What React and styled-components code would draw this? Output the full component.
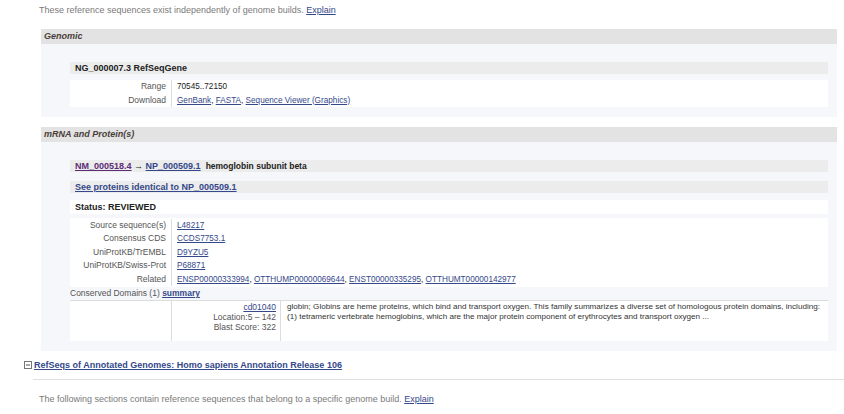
import React from "react";
import styled, { createGlobalStyle } from "styled-components";

const GlobalStyle = createGlobalStyle`
  body {
    margin: 0;
    background: #ffffff;
    font-family: "Liberation Sans", Arial, sans-serif;
    font-size: 9px;
    color: #333;
  }
`;

const Page = styled.div`
  width: 844px;
  padding-top: 4px;
`;

const Note = styled.p`
  margin: 0;
  padding-left: 39px;
  line-height: 13px;
  color: #7a7a7a;
  font-size: 9px;
`;

const Link = styled.a`
  color: ${({ visited }) => (visited ? "#5c2d77" : "#34488a")};
  text-decoration: underline;
  font-weight: ${({ bold }) => (bold ? "bold" : "normal")};
  cursor: pointer;
`;

const Sections = styled.div`
  margin: 12px 0 0 41px;
  width: 796px;
  display: flex;
  flex-direction: column;
  gap: 10px;
`;

const SectionHead = styled.div`
  height: 15px;
  line-height: 15px;
  padding-left: 3px;
  background: #e3e3e3;
  color: #4a3e3a;
  font-weight: bold;
  font-style: italic;
  font-size: 9px;
`;

const SectionBody = styled.div`
  background: #f6f7fa;
  padding: 18px 9px 10px 29px;
  display: flex;
  flex-direction: column;
`;

const Bar = styled.div`
  height: 12px;
  line-height: 12px;
  padding-left: 5px;
  background: #ececec;
  font-weight: bold;
  color: #222;
  margin-top: ${({ gap }) => gap || 0}px;
`;

const Title = styled.span`
  margin-left: 5px;
  font-size: 8.5px;
`;

const StatusBox = styled.div`
  margin-top: 7px;
  height: 14px;
  line-height: 14px;
  padding-left: 5px;
  background: #ffffff;
  font-weight: bold;
  color: #222;
`;

const DetailTable = styled.div`
  display: grid;
  grid-template-columns: 102px 1fr;
  background: #ffffff;
  margin-top: ${({ gap }) => gap}px;
  padding: ${({ pad }) => pad}px 0;
`;

const Label = styled.div`
  text-align: right;
  padding-right: 5px;
  border-right: 1px solid #dcdcdc;
  color: #555;
  font-size: 8.5px;
  line-height: ${({ lh }) => lh}px;
  white-space: nowrap;
`;

const Value = styled.div`
  padding-left: 5px;
  font-size: 8.2px;
  line-height: ${({ lh }) => lh}px;
  color: #222;
  white-space: nowrap;
`;

const DomainLine = styled.div`
  height: 13px;
  line-height: 13px;
  font-size: 8.5px;
  color: #555;
`;

const DomainBox = styled.div`
  display: grid;
  grid-template-columns: 102px 109px 1fr;
  background: #ffffff;
  border-top: 1px solid #dcdcdc;
  height: 40px;
`;

const DomainCell = styled.div`
  border-right: ${({ divider }) => (divider ? "1px solid #dcdcdc" : "none")};
  text-align: ${({ right }) => (right ? "right" : "left")};
  padding: 1px ${({ right }) => (right ? "4px" : "0")} 0
    ${({ right }) => (right ? "0" : "6px")};
  line-height: 10px;
  color: ${({ right }) => (right ? "#555" : "#333")};
  font-size: ${({ small }) => (small ? "8.1px" : "8.5px")};
`;

const Annotated = styled.div`
  display: flex;
  align-items: center;
  gap: 2px;
  margin: 7px 0 0 24px;
  height: 14px;
  font-size: 9px;
`;

const Rule = styled.hr`
  margin: 7px 0 0 33px;
  border: none;
  border-top: 1px solid #e0e0e0;
`;

const BottomNote = styled(Note)`
  margin-top: 13px;
`;

function ToggleIcon() {
  return (
    <svg width="8" height="8" viewBox="0 0 8 8">
      <rect x="0.5" y="0.5" width="7" height="7" fill="#fff" stroke="#777" />
      <line x1="2" y1="4" x2="6" y2="4" stroke="#555" />
    </svg>
  );
}

const mrnaRows = [
  ["Source sequence(s)", ["L48217"]],
  ["Consensus CDS", ["CCDS7753.1"]],
  ["UniProtKB/TrEMBL", ["D9YZU5"]],
  ["UniProtKB/Swiss-Prot", ["P68871"]],
  [
    "Related",
    [
      "ENSP00000333994",
      "OTTHUMP00000069644",
      "ENST00000335295",
      "OTTHUMT00000142977",
    ],
  ],
];

function LinkList({ items }) {
  return items.map((text, i) => (
    <React.Fragment key={text}>
      <Link>{text}</Link>
      {i < items.length - 1 ? ", " : ""}
    </React.Fragment>
  ));
}

export default function App() {
  return (
    <Page>
      <GlobalStyle />
      <Note>
        These reference sequences exist independently of genome builds.{" "}
        <Link>Explain</Link>
      </Note>

      <Sections>
        <div>
          <SectionHead>Genomic</SectionHead>
          <SectionBody>
            <Bar>NG_000007.3 RefSeqGene</Bar>
            <DetailTable gap={6} pad={0}>
              <Label lh={13.5}>Range</Label>
              <Value lh={13.5}>70545..72150</Value>
              <Label lh={13.5}>Download</Label>
              <Value lh={13.5}>
                <LinkList
                  items={["GenBank", "FASTA", "Sequence Viewer (Graphics)"]}
                />
              </Value>
            </DetailTable>
          </SectionBody>
        </div>

        <div>
          <SectionHead>mRNA and Protein(s)</SectionHead>
          <SectionBody>
            <Bar>
              <Link visited bold>
                NM_000518.4
              </Link>{" "}
              →{" "}
              <Link bold>NP_000509.1</Link>
              <Title>hemoglobin subunit beta</Title>
            </Bar>
            <Bar gap={9}>
              <Link bold>See proteins identical to NP_000509.1</Link>
            </Bar>
            <StatusBox>Status: REVIEWED</StatusBox>
            <DetailTable gap={4} pad={1}>
              {mrnaRows.map(([label, links]) => (
                <React.Fragment key={label}>
                  <Label lh={13.4}>{label}</Label>
                  <Value lh={13.4}>
                    <LinkList items={links} />
                  </Value>
                </React.Fragment>
              ))}
            </DetailTable>
            <DomainLine>
              Conserved Domains (1) <Link bold>summary</Link>
            </DomainLine>
            <DomainBox>
              <DomainCell divider />
              <DomainCell divider right>
                <Link>cd01040</Link>
                <br />
                Location:5 – 142
                <br />
                Blast Score: 322
              </DomainCell>
              <DomainCell small>
                globin; Globins are heme proteins, which bind and transport
                oxygen. This family summarizes a diverse set of homologous
                protein domains, including:
                <br />
                (1) tetrameric vertebrate hemoglobins, which are the major
                protein component of erythrocytes and transport oxygen ...
              </DomainCell>
            </DomainBox>
          </SectionBody>
        </div>
      </Sections>

      <Annotated>
        <ToggleIcon />
        <Link bold>
          RefSeqs of Annotated Genomes: Homo sapiens Annotation Release 106
        </Link>
      </Annotated>
      <Rule />
      <BottomNote>
        The following sections contain reference sequences that belong to a
        specific genome build. <Link>Explain</Link>
      </BottomNote>
    </Page>
  );
}
